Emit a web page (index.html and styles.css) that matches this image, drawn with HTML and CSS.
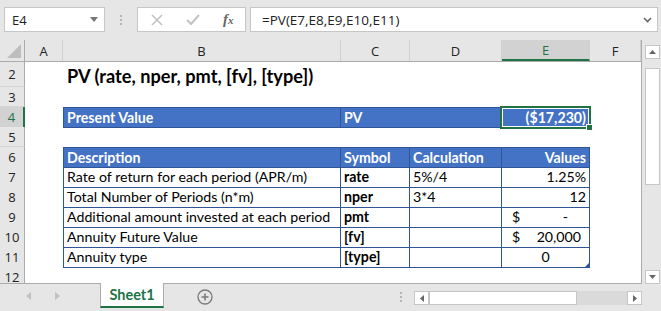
FILE: index.html
```html
<!DOCTYPE html>
<html lang="en">
<head>
    <meta charset="UTF-8" />
    <meta name="viewport" content="width=device-width, initial-scale=1" />
    <title>PV Function - Excel</title>
    <link rel="stylesheet" href="styles.css">
</head>
<body>
    <div class="toolbar">
        <div class="namebox">
            <span>E4</span>
            <svg class="caret" width="8" height="5" viewBox="0 0 8 5"><path d="M0 0h8L4 5z" fill="#777"/></svg>
        </div>
        <div class="grip"><i></i><i></i><i></i></div>
        <div class="fxbtns">
            <svg width="12" height="12" viewBox="0 0 12 12"><path d="M1 1L11 11M11 1L1 11" stroke="#c3c3c3" stroke-width="1.6"/></svg>
            <svg width="14" height="12" viewBox="0 0 14 12"><path d="M1 6L5 10L13 1" stroke="#c3c3c3" stroke-width="2" fill="none"/></svg>
            <span class="fx"><i>f</i><i>x</i></span>
        </div>
        <div class="formula">
            <span>=PV(E7,E8,E9,E10,E11)</span>
            <svg width="9" height="6" viewBox="0 0 9 6"><path d="M1 1L4.5 4.5L8 1" stroke="#666" stroke-width="1.6" fill="none"/></svg>
        </div>
    </div>

    <div class="main">
        <div class="sheet">
            <div class="row colhead">
                <div class="corner"><svg width="14" height="14" viewBox="0 0 14 14"><path d="M14 0V14H0z" fill="#bdbdbd"/></svg></div>
                <div>A</div><div>B</div><div>C</div><div>D</div><div class="cur">E</div><div>F</div>
            </div>
            <div class="row tall">
                <div class="rh">2</div><div></div>
                <div class="title">PV (rate, nper, pmt, [fv], [type])</div>
                <div></div><div></div><div></div><div></div>
            </div>
            <div class="row">
                <div class="rh">3</div><div></div><div></div><div></div><div></div><div></div><div></div>
            </div>
            <div class="row">
                <div class="rh cur">4</div><div></div>
                <div class="hd first top">Present Value</div>
                <div class="hd top span2">PV</div>
                <div class="hd top num sel">($17,230)</div>
                <div></div>
            </div>
            <div class="row">
                <div class="rh">5</div><div></div><div></div><div></div><div></div><div></div><div></div>
            </div>
            <div class="row">
                <div class="rh">6</div><div></div>
                <div class="hd first top">Description</div>
                <div class="hd top">Symbol</div>
                <div class="hd top">Calculation</div>
                <div class="hd top num">Values</div>
                <div></div>
            </div>
            <div class="row">
                <div class="rh">7</div><div></div>
                <div class="bd first">Rate of return for each period (APR/m)</div>
                <div class="bd sym">rate</div>
                <div class="bd">5%/4</div>
                <div class="bd num">1.25%</div>
                <div></div>
            </div>
            <div class="row">
                <div class="rh">8</div><div></div>
                <div class="bd first">Total Number of Periods (n*m)</div>
                <div class="bd sym">nper</div>
                <div class="bd">3*4</div>
                <div class="bd num">12</div>
                <div></div>
            </div>
            <div class="row">
                <div class="rh">9</div><div></div>
                <div class="bd first">Additional amount invested at each period</div>
                <div class="bd sym">pmt</div>
                <div class="bd"></div>
                <div class="bd acct"><span>$</span><span class="dash">-</span></div>
                <div></div>
            </div>
            <div class="row">
                <div class="rh">10</div><div></div>
                <div class="bd first">Annuity Future Value</div>
                <div class="bd sym">[fv]</div>
                <div class="bd"></div>
                <div class="bd acct"><span>$</span><span>20,000</span></div>
                <div></div>
            </div>
            <div class="row">
                <div class="rh">11</div><div></div>
                <div class="bd first">Annuity type</div>
                <div class="bd sym">[type]</div>
                <div class="bd"></div>
                <div class="bd mid last">0</div>
                <div></div>
            </div>
            <div class="row">
                <div class="rh">12</div><div></div><div></div><div></div><div></div><div></div><div></div>
            </div>
        </div>

        <div class="vscroll">
            <div class="sbtn"><svg width="7" height="4" viewBox="0 0 7 4"><path d="M0 4L3.5 0L7 4z" fill="#666"/></svg></div>
            <div class="vthumb"></div>
            <div class="vtrack"></div>
            <div class="sbtn"><svg width="7" height="4" viewBox="0 0 7 4"><path d="M0 0L3.5 4L7 0z" fill="#666"/></svg></div>
        </div>
    </div>

    <div class="tabbar">
        <div class="nav">
            <svg width="5" height="8" viewBox="0 0 5 8"><path d="M5 0V8L0 4z" fill="#c2c2c2"/></svg>
            <svg width="5" height="8" viewBox="0 0 5 8"><path d="M0 0V8L5 4z" fill="#c2c2c2"/></svg>
        </div>
        <div class="tab">Sheet1</div>
        <div class="addsheet">
            <svg width="16" height="16" viewBox="0 0 16 16"><circle cx="8" cy="8" r="7" fill="none" stroke="#7a7a7a" stroke-width="1.3"/><path d="M8 4.5V11.5M4.5 8H11.5" stroke="#7a7a7a" stroke-width="1.6"/></svg>
        </div>
        <div class="grip small"><i></i><i></i><i></i></div>
        <div class="hscroll">
            <div class="sbtn"><svg width="4" height="7" viewBox="0 0 4 7"><path d="M4 0V7L0 3.5z" fill="#666"/></svg></div>
            <div class="hthumb"></div>
            <div class="htrack"></div>
            <div class="sbtn"><svg width="4" height="7" viewBox="0 0 4 7"><path d="M0 0V7L4 3.5z" fill="#666"/></svg></div>
        </div>
    </div>
</body>
</html>
```

FILE: styles.css
```css
body { margin: 0; width: 661px; height: 311px; overflow: hidden; background: #e6e6e6; font-family: "Open Sans", sans-serif; }

/* formula bar */
.toolbar { height: 40px; display: flex; align-items: flex-start; padding: 7px 3px 0 4px; box-sizing: border-box; }
.namebox { width: 101px; height: 25px; background: #fff; border: 1px solid #c6c6c6; box-sizing: border-box; display: flex; align-items: center; justify-content: space-between; padding: 0 6px 0 7px; font-size: 13px; color: #222; }
.grip { width: 32px; height: 25px; display: flex; flex-direction: column; align-items: center; justify-content: center; gap: 2px; }
.grip i { width: 2px; height: 2px; background: #b5b5b5; }
.fxbtns { width: 109px; height: 25px; background: #fff; border: 1px solid #c6c6c6; box-sizing: border-box; display: flex; align-items: center; padding: 0 0 0 13px; gap: 23px; }
.fx { font-family: "Liberation Serif", serif; font-size: 15px; font-weight: bold; color: #666; }
.fx i:last-child { font-size: 11px; }
.formula { flex: 1; margin-left: 4px; height: 25px; background: #fff; border: 1px solid #c6c6c6; box-sizing: border-box; display: flex; align-items: center; justify-content: space-between; padding: 0 5px 0 11px; font-size: 13.5px; color: #222; }

/* grid */
.main { display: flex; height: 244px; }
.sheet { width: 642px; background: #fff; border-right: 1px solid #ababab; border-bottom: 1px solid #ababab; box-sizing: border-box; overflow: hidden; font-family: "Lato", sans-serif; font-size: 14.2px; color: #000; }
.row { display: grid; grid-template-columns: 25px 38px 278px 69px 92px 88px 51px; height: 20px; }
.row > div { position: relative; white-space: nowrap; box-sizing: border-box; }
.row.tall { height: 25px; }
.colhead { height: 22px; background: #e6e6e6; border-bottom: 1px solid #ababab; box-sizing: border-box; font-family: "Open Sans", sans-serif; font-size: 13px; color: #222; }
.colhead > div { display: flex; align-items: center; justify-content: center; border-right: 1px solid #d0d0d0; }
.colhead .corner { align-items: flex-end; justify-content: flex-end; padding: 0 3px 3px 0; border-right-color: #ababab; }
.colhead .cur { background: #d2d2d2; color: #217346; border-bottom: 2px solid #217346; }
.rh { background: #e6e6e6; border-right: 1px solid #ababab; border-bottom: 1px solid #d4d4d4; font-family: "Open Sans", sans-serif; font-size: 13px; color: #222; display: flex; align-items: center; justify-content: center; }
.rh.cur { background: #d2d2d2; color: #217346; border-right: 2px solid #217346; }
.title { font-weight: bold; font-size: 18.2px; padding: 3px 0 0 4px; }

/* blue table */
.hd, .bd { border-right: 1px solid #2f5597; border-bottom: 1px solid #2f5597; padding: 0 3px 0 3px; line-height: 20px; }
.hd { background: #4472c4; color: #fff; font-weight: bold; }
.first { border-left: 1px solid #2f5597; }
.top { border-top: 1px solid #2f5597; line-height: 19px; }
.span2 { grid-column: span 2; }
.num { text-align: right; }
.mid { text-align: center; }
.sym { font-weight: bold; }
.acct { display: flex; justify-content: space-between; padding: 0 8px 0 10px; }
.acct .dash { padding-right: 13px; }
.sel::after { content: ""; position: absolute; left: -2px; top: -2px; right: -2px; bottom: -2px; border: 2px solid #217346; box-shadow: inset 0 0 0 1px #fff; }
.sel::before { content: ""; position: absolute; right: -4px; bottom: -4px; width: 5px; height: 5px; background: #217346; border: 1px solid #fff; z-index: 1; }
.last::after { content: ""; position: absolute; right: 0; bottom: 0; border-left: 4px solid transparent; border-bottom: 4px solid #2f5597; }

/* scrollbars */
.vscroll { width: 19px; display: flex; flex-direction: column; align-items: flex-end; padding: 5px 1px 0 0; box-sizing: border-box; }
.sbtn { width: 15px; height: 14px; background: #fff; border: 1px solid #c6c6c6; box-sizing: border-box; display: flex; align-items: center; justify-content: center; }
.vthumb { width: 15px; height: 117px; margin-top: 9px; background: #fff; border: 1px solid #c6c6c6; box-sizing: border-box; }
.vtrack { flex: 1; }

/* sheet tabs */
.tabbar { height: 27px; display: flex; align-items: flex-start; }
.nav { width: 100px; height: 24px; display: flex; align-items: center; gap: 24px; padding-left: 26px; box-sizing: border-box; }
.tab { width: 64px; height: 25px; background: #fff; border-left: 1px solid #ababab; border-right: 1px solid #ababab; border-bottom: 2px solid #217346; box-sizing: border-box; display: flex; align-items: center; justify-content: center; margin-top: -1px; font-family: "Lato", sans-serif; font-weight: bold; font-size: 14.5px; color: #217346; }
.addsheet { width: 84px; height: 26px; display: flex; align-items: center; padding-left: 33px; box-sizing: border-box; }
.grip.small { width: 166px; height: 26px; align-items: flex-end; padding-right: 12px; box-sizing: border-box; }
.hscroll { margin-top: 7px; width: 228px; height: 14px; display: flex; background: #dadada; }
.hthumb { width: 148px; background: #fff; border: 1px solid #c6c6c6; box-sizing: border-box; }
.htrack { flex: 1; }
```
